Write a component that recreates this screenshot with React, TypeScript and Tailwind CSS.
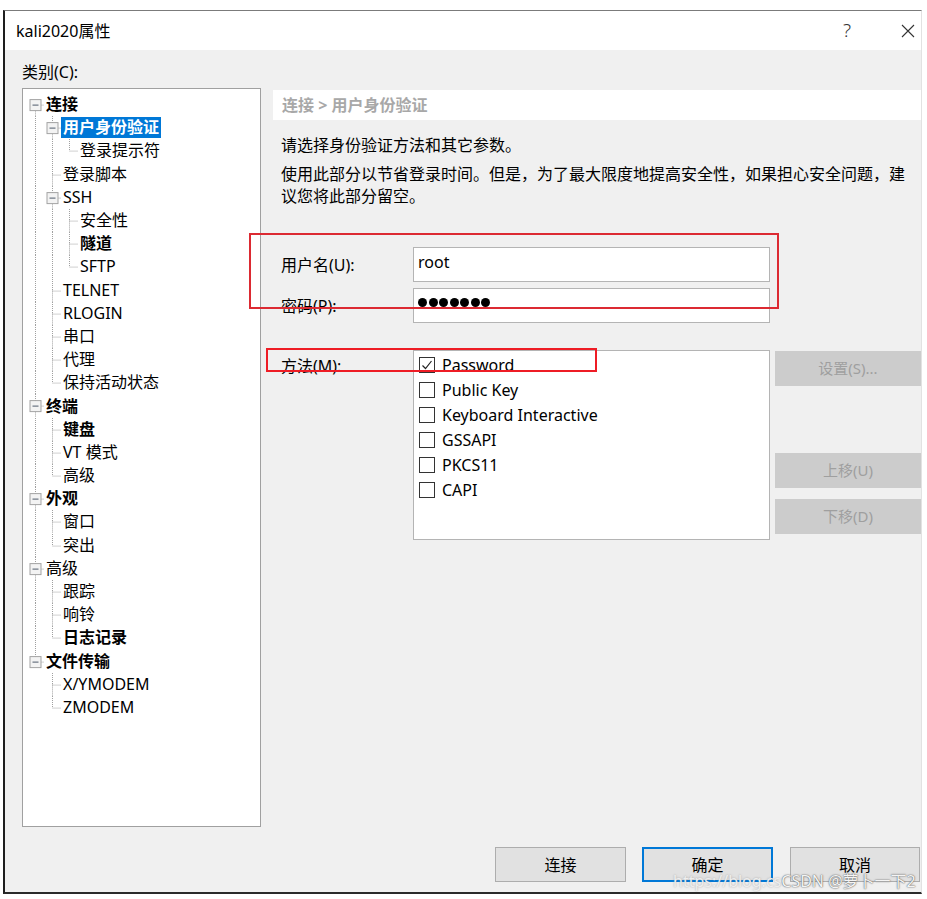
import React from "react";

type Node = {
  label: string;
  bold?: boolean;
  selected?: boolean;
  children?: Node[];
};

const tree: Node[] = [
  {
    label: "连接",
    bold: true,
    children: [
      { label: "用户身份验证", bold: true, selected: true, children: [{ label: "登录提示符" }] },
      { label: "登录脚本" },
      {
        label: "SSH",
        children: [{ label: "安全性" }, { label: "隧道", bold: true }, { label: "SFTP" }],
      },
      { label: "TELNET" },
      { label: "RLOGIN" },
      { label: "串口" },
      { label: "代理" },
      { label: "保持活动状态" },
    ],
  },
  {
    label: "终端",
    bold: true,
    children: [{ label: "键盘", bold: true }, { label: "VT 模式" }, { label: "高级" }],
  },
  { label: "外观", bold: true, children: [{ label: "窗口" }, { label: "突出" }] },
  {
    label: "高级",
    children: [{ label: "跟踪" }, { label: "响铃" }, { label: "日志记录", bold: true }],
  },
  { label: "文件传输", bold: true, children: [{ label: "X/YMODEM" }, { label: "ZMODEM" }] },
];

type Row = {
  node: Node;
  depth: number;
  guides: boolean[];
  isLast: boolean;
  isFirstRoot: boolean;
};

function flatten(nodes: Node[], depth: number, guides: boolean[], out: Row[]) {
  nodes.forEach((node, i) => {
    const isLast = i === nodes.length - 1;
    out.push({ node, depth, guides, isLast, isFirstRoot: depth === 0 && i === 0 });
    if (node.children) flatten(node.children, depth + 1, [...guides, !isLast], out);
  });
  return out;
}

const rows = flatten(tree, 0, [], []);
const ROW_H = 23.2;
const MID = ROW_H / 2;

function GuideCell({ kind, row }: { kind: "pass" | "own" | "none"; row?: Row }) {
  return (
    <svg width="17" height={ROW_H} className="shrink-0 block">
      {kind === "pass" && (
        <line x1="8.5" y1="0" x2="8.5" y2={ROW_H} stroke="#a0a0a0" strokeDasharray="1 1" />
      )}
      {kind === "own" && row && (
        <>
          {!row.isFirstRoot && (
            <line x1="8.5" y1="0" x2="8.5" y2={MID} stroke="#a0a0a0" strokeDasharray="1 1" />
          )}
          {!row.isLast && (
            <line x1="8.5" y1={MID} x2="8.5" y2={ROW_H} stroke="#a0a0a0" strokeDasharray="1 1" />
          )}
          <line x1="8.5" y1={MID + 0.5} x2="17" y2={MID + 0.5} stroke="#a0a0a0" strokeDasharray="1 1" />
          {row.node.children && (
            <>
              <rect x="3" y={MID - 5} width="11" height="11" fill="#f3f3f3" stroke="#a3a3a3" />
              <line x1="5.5" y1={MID + 0.5} x2="11.5" y2={MID + 0.5} stroke="#4d5a6a" />
            </>
          )}
        </>
      )}
    </svg>
  );
}

function TreeRow({ row }: { row: Row }) {
  const cells = [];
  for (let k = 0; k < row.depth; k++) {
    cells.push(<GuideCell key={k} kind={row.guides[k] ? "pass" : "none"} />);
  }
  cells.push(<GuideCell key="own" kind="own" row={row} />);
  return (
    <div className="flex items-center" style={{ height: ROW_H }}>
      {cells}
      <span
        className={
          "h-[21px] px-[2px] leading-[21px] whitespace-nowrap text-[16px] " +
          (row.node.selected ? "bg-[#0078d7] text-white " : "text-black ") +
          (row.node.bold ? "font-bold" : "")
        }
      >
        {row.node.label}
      </span>
    </div>
  );
}

function Checkbox({ checked, label }: { checked?: boolean; label: string }) {
  return (
    <div className="flex h-[25px] items-center">
      <div className="flex h-[16px] w-[16px] items-center justify-center border border-[#333333] bg-white">
        {checked && (
          <svg width="12" height="12" viewBox="0 0 12 12">
            <path d="M1.5 6.5 L4.5 9.5 L10.5 2" fill="none" stroke="#222" strokeWidth="1.2" />
          </svg>
        )}
      </div>
      <span className="ml-[7px] text-[16px] leading-[20px] text-black">{label}</span>
    </div>
  );
}

function DisabledButton({ label, className }: { label: string; className?: string }) {
  return (
    <div
      className={
        "flex h-[35px] items-center justify-center bg-[#cccccc] text-[15px] text-[#9f9f9f] " +
        (className ?? "")
      }
    >
      {label}
    </div>
  );
}

export default function App() {
  return (
    <div
      className="min-h-screen bg-white pt-[10px] pl-[3px] text-black"
      style={{ fontFamily: '"Noto Sans", "Noto Sans CJK SC", sans-serif' }}
    >
      <div className="w-[919px] border-t border-l-2 border-b-2 border-r border-t-[#7b7b7b] border-l-[#1e1e1e] border-b-[#2a2a2a] border-r-[#e2e2e2]">
        {/* Title bar */}
        <div className="flex h-[39px] items-center bg-white pl-[11px]">
          <span className="text-[16px]">kali2020属性</span>
          <span className="ml-auto mr-[50px] text-[19px] font-light text-[#333]">?</span>
          <svg width="14" height="14" viewBox="0 0 14 14" className="mr-[6px]">
            <path d="M1 1 L13 13 M13 1 L1 13" stroke="#333" strokeWidth="1.1" />
          </svg>
        </div>

        {/* Body */}
        <div className="relative h-[842px] bg-[#f0f0f0]">
          <div className="flex pl-[17px]">
            {/* Category tree */}
            <div className="w-[239px] pt-[11px]">
              <div className="h-[22px] text-[16px] leading-[22px]">类别(C):</div>
              <div className="mt-[5px] h-[739px] border border-[#a0a0a0] bg-white pt-[4px] pl-[4px]">
                {rows.map((row, i) => (
                  <TreeRow key={i} row={row} />
                ))}
              </div>
            </div>

            {/* Right panel */}
            <div className="ml-[12px] w-[648px] pt-[40px]">
              <div className="flex h-[30px] items-center bg-white pl-[9px] text-[16px] font-bold text-[#a8a8a8]">
                连接 &gt; 用户身份验证
              </div>
              <div className="mt-[14px] pl-[8px] text-[16px] leading-[22px]">
                请选择身份验证方法和其它参数。
              </div>
              <div className="mt-[7px] pl-[8px] text-[16px] leading-[22px] whitespace-nowrap">
                使用此部分以节省登录时间。但是，为了最大限度地提高安全性，如果担心安全问题，建
                <br />
                议您将此部分留空。
              </div>

              <div className="mt-[40px] flex items-center">
                <div className="w-[140px] pl-[8px] text-[16px]">用户名(U):</div>
                <div className="flex h-[35px] w-[357px] items-start border border-[#b4b4b4] bg-white pl-[4px] pt-[3px] text-[16px] leading-[22px]">
                  root
                </div>
              </div>
              <div className="mt-[6px] flex items-center">
                <div className="w-[140px] pl-[8px] text-[16px]">密码(P):</div>
                <div className="flex h-[35px] w-[357px] items-start gap-[1.5px] border border-[#b4b4b4] bg-white pl-[4px] pt-[9px]">
                  {[0, 1, 2, 3, 4, 5, 6].map((i) => (
                    <span key={i} className="h-[9px] w-[9px] rounded-full bg-black" />
                  ))}
                </div>
              </div>

              <div className="mt-[27px] flex items-start">
                <div className="w-[140px] pl-[8px] pt-[5px] text-[16px] leading-[22px]">方法(M):</div>
                <div className="h-[190px] w-[357px] border border-[#b4b4b4] bg-white pt-[1px] pl-[5px]">
                  <Checkbox checked label="Password" />
                  <Checkbox label="Public Key" />
                  <Checkbox label="Keyboard Interactive" />
                  <Checkbox label="GSSAPI" />
                  <Checkbox label="PKCS11" />
                  <Checkbox label="CAPI" />
                </div>
                <div className="ml-[5px] w-[146px]">
                  <DisabledButton label="设置(S)..." className="mt-[1px]" />
                  <DisabledButton label="上移(U)" className="mt-[67px]" />
                  <DisabledButton label="下移(D)" className="mt-[11px]" />
                </div>
              </div>
            </div>
          </div>

          {/* Dialog buttons */}
          <div className="mt-[20px] flex justify-end pr-[1px]">
            <div className="flex h-[35px] w-[131px] items-center justify-center border border-[#adadad] bg-[#e1e1e1] text-[16px]">
              连接
            </div>
            <div className="ml-[16px] flex h-[35px] w-[131px] items-center justify-center border-2 border-[#0078d7] bg-[#e1e1e1] text-[16px]">
              确定
            </div>
            <div className="ml-[17px] flex h-[35px] w-[130px] items-center justify-center border border-[#adadad] bg-[#e1e1e1] text-[16px]">
              取消
            </div>
          </div>

          {/* Annotation boxes */}
          <div className="pointer-events-none absolute left-[244px] top-[183px] h-[76px] w-[530px] border-2 border-[#dc2a32]" />
          <div className="pointer-events-none absolute left-[261px] top-[298px] h-[24px] w-[331px] border-2 border-[#ee1c25]" />

          {/* Watermark */}
          <div
            className="pointer-events-none absolute left-[668px] top-[821px] whitespace-nowrap text-[16px] leading-[20px]"
            style={{ textShadow: "0 0 2px rgba(120,120,120,0.6)" }}
          >
            <span className="text-[#eeeeee]">https://blog.cs</span>
            <span className="text-[#f4f4f4]" style={{ textShadow: "0 0 1px #555, 0 0 2px #777" }}>
              CSDN @萝卜一下2
            </span>
          </div>
        </div>
      </div>
    </div>
  );
}
